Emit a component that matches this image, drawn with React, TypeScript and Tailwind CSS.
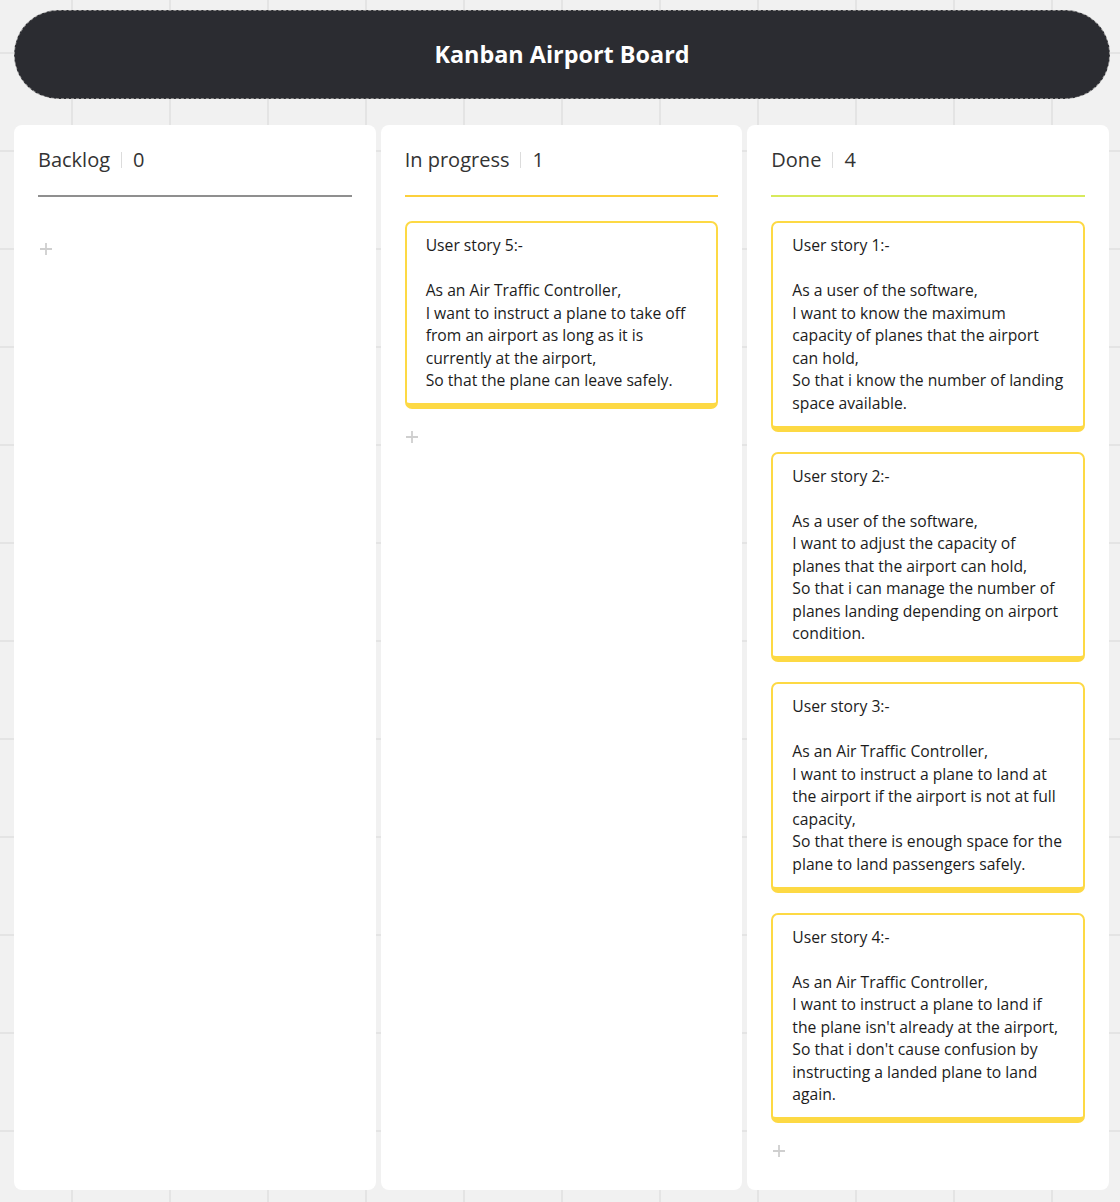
type Column = {
  title: string;
  accent: string;
  cards: string[][];
};

const columns: Column[] = [
  { title: "Backlog", accent: "bg-[#8f8f8f]", cards: [] },
  {
    title: "In progress",
    accent: "bg-[#fcd03c]",
    cards: [
      [
        "User story 5:-",
        "",
        "As an Air Traffic Controller,",
        "I want to instruct a plane to take off from an airport as long as it is currently at the airport,",
        "So that the plane can leave safely.",
      ],
    ],
  },
  {
    title: "Done",
    accent: "bg-[#d7ea5c]",
    cards: [
      [
        "User story 1:-",
        "",
        "As a user of the software,",
        "I want to know the maximum capacity of planes that the airport can hold,",
        "So that i know the number of landing space available.",
      ],
      [
        "User story 2:-",
        "",
        "As a user of the software,",
        "I want to adjust the capacity of planes that the airport can hold,",
        "So that i can manage the number of planes landing depending on airport condition.",
      ],
      [
        "User story 3:-",
        "",
        "As an Air Traffic Controller,",
        "I want to instruct a plane to land at the airport if the airport is not at full capacity,",
        "So that there is enough space for the plane to land passengers safely.",
      ],
      [
        "User story 4:-",
        "",
        "As an Air Traffic Controller,",
        "I want to instruct a plane to land if the plane isn't already at the airport,",
        "So that i don't cause confusion by instructing a landed plane to land again.",
      ],
    ],
  },
];

function StoryCard({ lines }: { lines: string[] }) {
  return (
    <div className="rounded-[7px] border-2 border-b-[6px] border-[#fdd944] bg-white px-[19px] pt-[11px] pb-[11.5px] text-[15.7px] leading-[22.5px] text-[#1c1c1c]">
      {lines.map((line, i) =>
        line ? <p key={i}>{line}</p> : <p key={i} className="h-[22.5px]" />
      )}
    </div>
  );
}

function AddIcon() {
  return (
    <svg width="12" height="12" viewBox="0 0 12 12" className="text-[#cfcfcf]">
      <path d="M6 0v12M0 6h12" stroke="currentColor" strokeWidth="1.8" fill="none" />
    </svg>
  );
}

export default function App() {
  return (
    <div className="min-h-[1202px] bg-[#f1f1f1] bg-[linear-gradient(to_right,#e4e4e4_2px,transparent_2px),linear-gradient(to_bottom,#e4e4e4_2px,transparent_2px)] bg-[size:98px_98px] bg-[position:71px_52px] pt-[10px] pl-[14px] pr-[10px] font-['Open_Sans',sans-serif]">
      <div className="flex h-[89px] items-center justify-center rounded-full border border-dashed border-[#8a8a8a] bg-[#2b2c31]">
        <h1 className="text-[23.4px] font-bold text-white">Kanban Airport Board</h1>
      </div>

      <div className="mt-[26px] mr-px grid grid-cols-3 gap-[5px]">
        {columns.map((col) => (
          <section
            key={col.title}
            className="h-[1065px] rounded-[8px] bg-white px-6 pt-5"
          >
            <div className="flex h-[30px] items-center text-[20px] text-[#333]">
              <span>{col.title}</span>
              <span className="mx-[11px] h-[16px] w-px bg-[#dcdcdc]" />
              <span>{col.cards.length}</span>
            </div>
            <div className={`mt-5 h-[2px] ${col.accent}`} />

            <div className="mt-6 flex flex-col gap-5">
              {col.cards.map((lines, i) => (
                <StoryCard key={i} lines={lines} />
              ))}
            </div>

            <div className="mt-5 flex h-4 w-[15px] items-center justify-center">
              <AddIcon />
            </div>
          </section>
        ))}
      </div>
    </div>
  );
}
